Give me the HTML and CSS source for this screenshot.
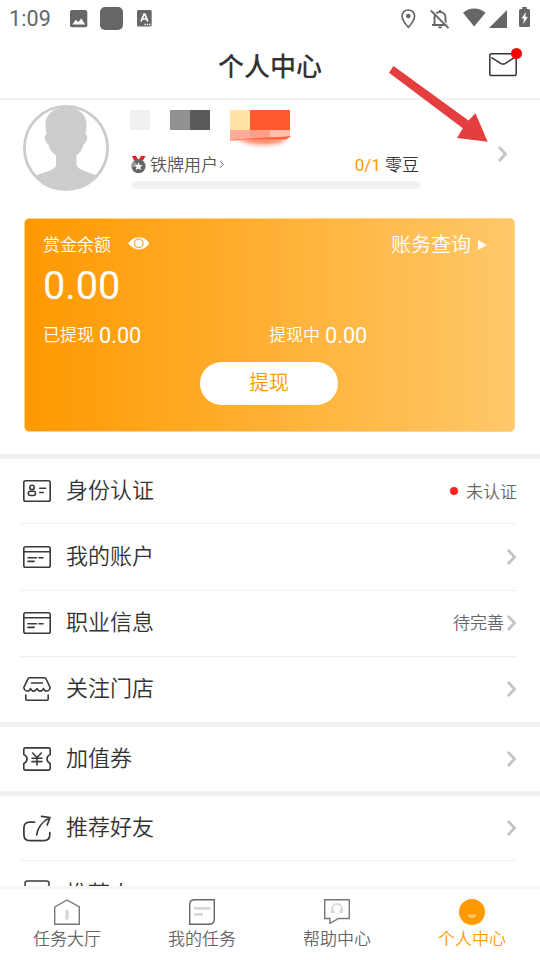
FILE: index.html
```html
<!DOCTYPE html>
<html lang="zh-CN">
<head>
<meta charset="utf-8">
<title>个人中心</title>
<link rel="stylesheet" href="styles.css">
</head>
<body>
<svg class="defs" width="0" height="0">
  <symbol id="chevron" viewBox="0 0 10 16"><path d="M1.700 1.700 7.500 8 1.700 14.300" fill="none" stroke="#c4c4c6" stroke-width="2.900" stroke-linecap="round" stroke-linejoin="miter"/></symbol>
  <symbol id="bankcard" viewBox="0 0 28 22"><g fill="none" stroke="#3a3a3a" stroke-width="1.600" stroke-linecap="round"><rect x=".8" y=".8" width="26.400" height="20.400" rx="1.800"/><path d="M1 5.800h26M5 11.700h8.500M16 11.700h4M5 15.400h6.200"/></g></symbol>
</svg>
<div class="screen">
  <div class="statusbar">
    <span class="clock">1:09</span>
    <svg class="s-photo" width="18" height="18" viewBox="0 0 18 18"><rect width="17.300" height="17.300" rx="2" fill="#666"/><path d="M2.300 14.500 5.800 9.700 8.200 12.300 11.300 8.500 15.300 14.500z" fill="#fff"/></svg>
    <span class="s-block"></span>
    <svg class="s-lang" width="15" height="17" viewBox="0 0 15 17"><rect width="14.700" height="16.500" rx="1.500" fill="#666"/><path d="M4 11.500 7 4h.8l3 7.500M5 9h4.800" fill="none" stroke="#fff" stroke-width="1.700"/><path d="M7.500 14.500h6" stroke="#fff" stroke-width="1.300" stroke-dasharray="1.300 1"/></svg>
    <span class="grow"></span>
    <svg class="s-pin" width="15" height="20" viewBox="0 0 15 20"><path d="M7.300 1C3.800 1 1.100 3.600 1.100 7c0 4.500 6.200 11.300 6.200 11.300S13.600 11.500 13.600 7c0-3.400-2.800-6-6.300-6z" fill="none" stroke="#666" stroke-width="1.700"/><circle cx="7.300" cy="7" r="2.300" fill="#666"/></svg>
    <svg class="s-bell" width="20" height="20" viewBox="0 0 20 20"><path d="M4.500 15V8.500C4.500 5 7 3 10 3s5.500 2 5.500 5.500V15M2 16h16M10 1v2" fill="none" stroke="#666" stroke-width="1.900"/><path d="M8 17.500h4.200a2.100 2 0 0 1-4.200 0z" fill="#666"/><path d="M2 1 19.500 18.500" stroke="#fff" stroke-width="1.500"/><path d="M.8 1.500 18.500 19.200" stroke="#666" stroke-width="1.800"/></svg>
    <svg class="s-wifi" width="23" height="19" viewBox="0 0 23 19"><path d="M0 4.700C6-1 16.500-1 22.500 4.700L11.200 18.500z" fill="#666"/></svg>
    <svg class="s-signal" width="18" height="18" viewBox="0 0 18 18"><path d="M18 0v18H0z" fill="#666"/></svg>
    <svg class="s-battery" width="11" height="20" viewBox="0 0 11 20"><path d="M3.200 0h4.600v2H9.500A1.500 1.500 0 0 1 11 3.500v15A1.500 1.500 0 0 1 9.500 20h-8A1.500 1.500 0 0 1 0 18.500v-15A1.500 1.500 0 0 1 1.500 2h1.700z" fill="#666"/><path d="M7 4.800 2.500 11.500H5l-.8 5.700 4.600-7.400H6.200z" fill="#fff"/></svg>
  </div>
  <header class="titlebar">
    <h1>个人中心</h1>
    <div class="mail">
      <svg width="28" height="24" viewBox="0 0 28 24"><g fill="none" stroke="#333" stroke-width="1.500" stroke-linecap="round" stroke-linejoin="round"><rect x=".8" y=".8" width="26.400" height="21.800" rx="1.800"/><path d="M3 4.900 12 10.600Q14 11.600 16 10.600L25 4.900"/></g></svg>
      <i class="badge"></i>
    </div>
  </header>

  <section class="profile">
    <svg class="avatar" width="86" height="86" viewBox="0 0 86 86"><path d="M43 2.500c-14 0-20.500 8-20.500 17 0 4 .8 7 1 10-3 0-1.700 8 2 10 1 5 4 8.500 7.500 11V60c0 5-13 7.500-21 11 8 9 20 13.500 31.500 13.500S66.500 80 75 71C66 67 53.500 65 53.500 59v-8.500c3-2.500 6-6 7-11 4-2 5-10 2-10 .3-3 1-6 1-10C63.500 10.500 57 2.500 43 2.500z" fill="#ccc"/><circle cx="43" cy="43" r="41.600" fill="none" stroke="#ccc" stroke-width="2.800"/></svg>
    <div class="info">
      <div class="name">
        <span class="px px-light"></span>
        <span class="px px-gray"></span>
        <svg width="64" height="42" viewBox="0 0 64 42"><defs><filter id="soft" x="-20%" y="-80%" width="140%" height="260%"><feGaussianBlur stdDeviation="2"/></filter></defs><path d="M6 28H57Q52 34.500 34 34.500T6 28z" fill="#ff8060" filter="url(#soft)"/><path d="M0 0h20v20H0z" fill="#ffe2a4"/><path d="M20 0h40v20H20z" fill="#ff5a30"/><path d="M0 20h60v7L0 31z" fill="#ffab97"/><path d="M20 20h20v7H20z" fill="#ff9f87"/><path d="M40 20h20v7H40z" fill="#ffc0b0"/><path d="M0 30.500C20 27 44 28 61.500 26L56 29.500H12z" fill="#ff6238"/></svg>
      </div>
      <div class="level">
        <svg width="16" height="19" viewBox="0 0 16 19"><path d="M1 1h4l2.500 4L10 1h4.500L12 5.500H3z" fill="#e82024"/><circle cx="7.500" cy="11.200" r="7" fill="#666"/><path d="M3 5.900a7 7 0 0 0-2.400 6.500L7.500 11z" fill="#999"/><path d="m7.500 7.200 1.200 2.700 2.900.3-2.200 1.900.7 2.800-2.600-1.500-2.600 1.500.7-2.800-2.200-1.900 2.900-.3z" fill="#fff"/></svg>
        <span class="rank">铁牌用户</span>
        <svg class="mini" width="6" height="9" viewBox="0 0 6 9"><path d="M1 1 4.300 4.400 1 7.800" fill="none" stroke="#666"/></svg>
        <span class="beans"><b>0/1</b> 零豆</span>
      </div>
      <div class="progress"></div>
    </div>
    <svg class="chev" width="10" height="16"><use href="#chevron"/></svg>
    <svg class="arrow" width="100" height="78" viewBox="0 0 100 78"><path d="M4.500 0 0 6.700 73.800 62.200 68 72 98.700 75.700 86.500 47.300 79.500 54.500z" fill="#e53e3e"/></svg>
  </section>

  <section class="wallet">
    <div class="w-head">
      <span class="w-label">赏金余额</span>
      <svg class="eye" width="22" height="13" viewBox="0 0 22 13"><path d="M0 6.300Q4.500.3 11 .3T21.500 6.300Q17 12.500 11 12.500T0 6.300z" fill="#fff"/><circle cx="10.700" cy="6.300" r="4.300" fill="#fff" stroke="#ffa318" stroke-width="1.200"/></svg>
      <span class="w-link">账务查询</span>
      <svg width="9" height="10" viewBox="0 0 9 10"><path d="M0 0v10L9 5z" fill="#fff"/></svg>
    </div>
    <div class="balance">0.00</div>
    <div class="w-stats"><div>已提现 <em>0.00</em></div><div>提现中 <em>0.00</em></div></div>
    <button class="withdraw">提现</button>
  </section>

  <main class="menu">
    <div class="group">
      <div class="row">
        <svg class="ico" width="28" height="22" viewBox="0 0 28 22"><g fill="none" stroke="#3a3a3a" stroke-width="1.600" stroke-linecap="round"><rect x=".8" y=".8" width="26.400" height="20.400" rx="1.800"/><circle cx="9" cy="7.400" r="2.200"/><rect x="5.300" y="11.300" width="7.200" height="4.200" rx="2"/><path d="M16.700 8.200h6M16.700 12.500h3.600"/></g></svg>
        <span class="label">身份认证</span><i class="dot"></i><span class="value">未认证</span>
      </div>
      <div class="row">
        <svg class="ico" width="28" height="22"><use href="#bankcard"/></svg>
        <span class="label">我的账户</span><svg class="chev" width="10" height="16"><use href="#chevron"/></svg>
      </div>
      <div class="row">
        <svg class="ico" width="28" height="22"><use href="#bankcard"/></svg>
        <span class="label">职业信息</span><span class="value">待完善</span><svg class="chev" width="10" height="16"><use href="#chevron"/></svg>
      </div>
      <div class="row">
        <svg class="ico" width="28" height="24" viewBox="0 0 28 24"><g fill="none" stroke="#3a3a3a" stroke-width="1.600" stroke-linecap="round" stroke-linejoin="round"><path d="M6.500.8h15Q22.500.8 23 1.800L27.200 10.500C26.500 15 21.500 15 20.500 11.500 19 15 15.500 15 14 11.500 12.500 15 9 15 7.500 11.500 6.500 15 1.500 15 .8 10.500L5 1.800Q5.500.8 6.500.8zM8.500 6h11M2.800 18v4.200q0 1 1 1h20.400q1 0 1-1V18"/></g></svg>
        <span class="label">关注门店</span><svg class="chev" width="10" height="16"><use href="#chevron"/></svg>
      </div>
    </div>
    <div class="group">
      <div class="row">
        <svg class="ico" width="28" height="24" viewBox="0 0 28 24"><g fill="none" stroke="#3a3a3a" stroke-width="1.600" stroke-linecap="round" stroke-linejoin="round"><path d="M2.300.9h23.400q1.500 0 1.500 1.500v5.200c-4.300 2-4.300 6.800 0 8.800v5.200q0 1.500-1.500 1.500H2.300Q.8 23.100.8 21.600v-5.200c4.300-2 4.300-6.800 0-8.800V2.400Q.8.900 2.300.9z"/><path d="M9.700 6 14 10.500 18.300 6M14 10.500V18M9 11.200h10M9 14.600h10"/></g></svg>
        <span class="label">加值券</span><svg class="chev" width="10" height="16"><use href="#chevron"/></svg>
      </div>
    </div>
    <div class="group">
      <div class="row">
        <svg class="ico" width="28" height="27" viewBox="0 0 28 27"><g fill="none" stroke="#3a3a3a" stroke-width="1.700" stroke-linecap="round" stroke-linejoin="round"><path d="M11.500 7.200H6.800C2.800 7.200.9 9 .9 13v6.500c0 4 1.900 6.200 5.900 6.200h13.700c4 0 6.300-2 6.300-6.200v-1.800M13.700 20C14.500 13.500 19 6.500 26.800 2.800M18.500 1.300 27 2.500 24.200 10"/></g></svg>
        <span class="label">推荐好友</span><svg class="chev" width="10" height="16"><use href="#chevron"/></svg>
      </div>
      <div class="row">
        <svg class="ico" width="28" height="28" viewBox="0 0 28 28"><rect x="2" y=".9" width="24" height="25" rx="2.500" fill="none" stroke="#3a3a3a" stroke-width="1.500"/></svg>
        <span class="label">推荐人</span>
      </div>
    </div>
  </main>

  <nav class="tabs">
    <div class="tab">
      <svg width="26" height="26" viewBox="0 0 26 26"><path d="M.7 8 13 1 25.300 8v17.300H.7z" fill="none" stroke="#777" stroke-width="1.400"/><path d="M13 11v9.500" stroke="#d8d8d8" stroke-width="3.500"/></svg>
      <span>任务大厅</span>
    </div>
    <div class="tab">
      <svg width="26" height="26" viewBox="0 0 26 26"><path d="M5.500.7h19.800v19c0 3.500-2 5.600-5.600 5.600H.7V5.500C.7 2.500 2.500.7 5.500.7z" fill="none" stroke="#666" stroke-width="1.400"/><path d="M5 9.300h16.500M5 15.300h9" stroke="#d8d8d8" stroke-width="2.800"/></svg>
      <span>我的任务</span>
    </div>
    <div class="tab">
      <svg width="26" height="26" viewBox="0 0 26 26"><path d="M.7.700h24.600v18.800H14.500L6 24.300v-4.800H.7z" fill="none" stroke="#777" stroke-width="1.400"/><path d="M8 13V10a5 5 0 0 1 10 0v3" fill="none" stroke="#d8d8d8" stroke-width="1.800"/><path d="M7 10.500h3.500V14H7zM15.500 10.500H19V14h-3.500z" fill="#d8d8d8"/></svg>
      <span>帮助中心</span>
    </div>
    <div class="tab active">
      <svg width="26" height="26" viewBox="0 0 26 26"><circle cx="13" cy="13" r="13" fill="#f90"/><path d="M8.300 15.500h9.400c-1 5-8.400 5-9.400 0z" fill="#ffc266"/></svg>
      <span>个人中心</span>
    </div>
  </nav>
</div>
</body>
</html>
```
FILE: styles.css
```css
* { box-sizing: border-box; }
body {
  margin: 0;
  background: #fff;
  color: #333;
  font-family: Roboto, "Noto Sans CJK SC", sans-serif;
  font-weight: 350;
}
svg { display: block; flex: none; }
.defs { position: absolute; }
.screen { width: 540px; height: 960px; display: flex; flex-direction: column; overflow: hidden; }
.grow { flex: 1; }

.statusbar { height: 37px; flex: none; display: flex; align-items: center; padding: 0 10px 0 9px; }
.clock { width: 61px; font-size: 21.500px; font-weight: 400; color: #666; letter-spacing: .1px; }
.s-block { width: 23px; height: 23px; border-radius: 5px; background: #666; margin: 0 14px 0 12px; }
.s-pin { margin-right: 14px; }
.s-bell { margin-right: 13px; }
.s-wifi { margin-right: 3px; margin-top: -2px; }
.s-signal { margin-right: 12px; }
.s-battery { margin-top: -3px; }

.titlebar { height: 63px; flex: none; display: flex; justify-content: center; border-bottom: 2px solid #f1f1f1; position: relative; }
.titlebar h1 { margin: 0; font-size: 26px; line-height: 60px; font-weight: 500; }
.mail { position: absolute; right: 23px; top: 16px; }
.badge { position: absolute; right: -5px; top: -5px; width: 11px; height: 11px; border-radius: 50%; background: #f00; }

.profile { height: 118px; flex: none; display: flex; align-items: flex-start; padding: 5px 0 0 23px; position: relative; }
.info { width: 290px; margin-left: 21px; padding-top: 5px; }
.name { display: flex; height: 41px; }
.px { height: 20px; }
.px-light { width: 20px; background: #f1f1f1; }
.px-gray { width: 40px; margin: 0 20px; background: linear-gradient(90deg, #919191 50%, #5a5a5a 50%); }
.level { display: flex; align-items: center; height: 26px; font-size: 17px; color: #555; margin-left: 1px; }
.level > span { padding-bottom: 2px; }
.rank { margin-left: 3px; }
.mini { margin-left: 1px; }
.beans { margin-left: auto; margin-right: 1px; color: #333; }
.beans b { font-weight: 400; color: #f90; }
.progress { height: 8px; margin: 4px 0 0 2px; border-radius: 4px; background: #f1f1f1; }
.profile .chev { margin: 41px 0 0 78px; }
.arrow { position: absolute; left: 389px; top: -34px; }

.wallet { width: 491px; height: 214px; flex: none; margin: 0 0 22px 24px; padding: 10px 19px; border-radius: 5px; background: linear-gradient(90deg, #f90, #ffc869); border: 1px solid #ffd38a; color: #fff; display: flex; flex-direction: column; }
.w-head { display: flex; align-items: center; height: 28px; margin-left: -1px; }
.w-label { font-size: 17px; }
.eye { margin: 1px 0 0 17px; }
.w-link { margin-left: auto; margin-right: 7px; font-size: 20px; }
.w-head svg:last-child { margin: 3px 8px 0 0; }
.balance { font-size: 39.700px; font-weight: 400; line-height: 52px; margin: 3px 0 0 -1px; }
.w-stats { display: flex; height: 30px; font-size: 17px; line-height: 30px; margin: 8px 0 0 -1px; }
.w-stats div { width: 226px; display: flex; gap: 5px; }
.w-stats em { font-style: normal; font-weight: 400; font-size: 21.700px; padding-top: 1px; }
.withdraw { align-self: center; width: 138px; height: 43px; flex: none; margin: 12px 0 0 -1px; padding: 0 0 4px; border: 0; border-radius: 22px; background: #fff; color: #f90; font: inherit; font-size: 20px; }

.menu { flex: 1; min-height: 0; overflow: hidden; }
.group { border-top: 5px solid #f1f1f1; padding: 0 23px 0 20px; }
.row { height: 66px; display: flex; align-items: center; padding: 0 0 2px 3px; border-top: 1px solid #f0f0f0; }
.row:first-child { height: 64px; border-top: 0; padding-bottom: 0; }
.row:nth-child(2) { height: 67px; padding-bottom: 0; }
.label { margin-left: 15px; margin-right: auto; font-size: 22px; line-height: 32px; }
.value { font-size: 17px; color: #666; padding-bottom: 2px; }
.dot { width: 8px; height: 8px; border-radius: 50%; background: #ff2020; margin-right: 8px; }
.row .chev { margin: 0 0 0 3px; }

.tabs { height: 74px; flex: none; display: flex; border-top: 3px solid #f7f7f7; background: #fff; }
.tab { flex: 1; display: flex; flex-direction: column; align-items: center; gap: 1px; padding: 10px 1px 0 0; font-size: 17px; line-height: 26px; color: #666; }
.active { color: #f90; }
```
